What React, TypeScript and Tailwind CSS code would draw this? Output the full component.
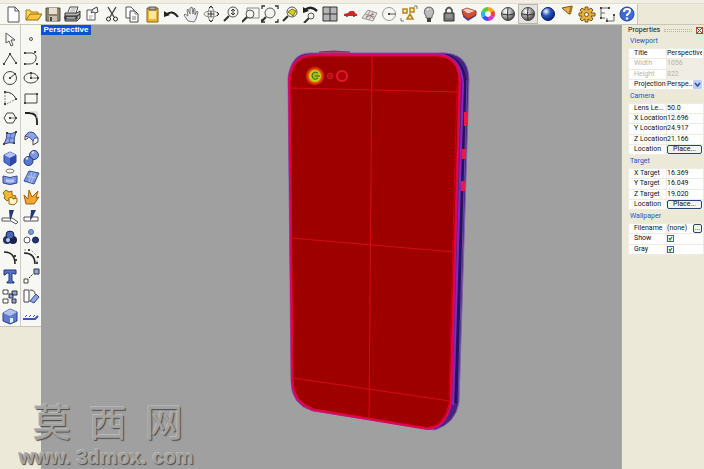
import React, { type ReactNode } from 'react';

type Tool = { name: string; icon: ReactNode; active?: boolean };

const ink = '#30302e';
const blue = '#4f70d0';
const pale = '#8fa5ea';

const Dots = ({ at, fill = '#444' }: { at: [number, number][]; fill?: string }) => (
  <>
    {at.map(([x, y]) => (
      <rect key={`${x}-${y}`} x={x - 1} y={y - 1} width="2" height="2" fill={fill} />
    ))}
  </>
);

const Lens = ({ x, y, r = 4 }: { x: number; y: number; r?: number }) => (
  <>
    <path d={`M${x - r + 1} ${y + r - 1}L${x - r - 4} ${y + r + 4}`} stroke={ink} strokeWidth="2" />
    <circle cx={x} cy={y} r={r} fill="#f4f4ee" stroke="#555" />
  </>
);

const Ball = ({ id, a, b, wire }: { id: string; a: string; b: string; wire?: boolean }) => (
  <>
    <radialGradient id={id} cx="0.35" cy="0.3" r="0.75">
      <stop offset="0" stopColor="#fff" />
      <stop offset="0.45" stopColor={a} />
      <stop offset="1" stopColor={b} />
    </radialGradient>
    <circle cx="9" cy="9" r="6.5" fill={`url(#${id})`} stroke={b} />
    {wire && <path d="M3 9Q9 11 15 9M9 3Q8 9 9 15" stroke="#333" />}
  </>
);

const topTools: Tool[] = [
  { name: 'New', icon: <><path d="M4 2h7l4 4v11H4z" fill="#fff" stroke="#555" /><path d="M11 2v4h4" stroke="#555" /></> },
  { name: 'Open', icon: <><path d="M2 15V5h4l1 2h7v3" fill="#f8d860" stroke="#b07808" /><path d="M2 15l4-6h12l-4 6z" fill="#ffc83a" stroke="#9a6808" /></> },
  { name: 'Save', icon: <><path d="M2 3h14v13H2z" fill="#8b8368" stroke="#55503f" /><path d="M5 3h8v6H5z" fill="#e4e1d2" /><path d="M5 11h8v5H5z" fill="#c4c0b0" /><path d="M6 12h2v4H6z" fill="#444" /></> },
  { name: 'Print', icon: <><path d="M5 7l2-5h8l-2 6" fill="#fff" stroke="#444" /><path d="M8 4h5M7 6h5" stroke="#999" /><path d="M2 8h12l3-2v7l-3 3H2z" fill="#b4b4b4" stroke="#333" /><path d="M2 11h12v3H2zM14 11l3-2" fill="#6b6b6b" stroke="#222" /><path d="M4 13h8" stroke="#ddd" /></> },
  { name: 'Properties', icon: <><path d="M4 5h8v10H4z" fill="#fff" stroke="#555" /><path d="M8 8l2-4 4-2 1 5-3 1-2-1z" fill="#eee" stroke="#444" /><path d="M6 11h4M6 13h3" stroke="#aaa" /></> },
  { name: 'Cut', icon: <><path d="M5 2l6 10M13 2L7 12" stroke="#444" strokeWidth="1.4" /><circle cx="5.5" cy="14" r="2" stroke="#222" /><circle cx="12.5" cy="14" r="2" stroke="#222" /></> },
  { name: 'Copy', icon: <><path d="M3 2h5l3 3v8H3z" fill="#fff" stroke="#555" /><path d="M7 6h5l3 3v8H7z" fill="#fff" stroke="#444" /><path d="M12 6v3h3M9 12h4M9 14h4" stroke="#777" /></> },
  { name: 'Paste', icon: <><path d="M4 3h11v14H4z" fill="#f0b72e" stroke="#886516" /><path d="M6 6h7v8H6z" fill="#ffe796" /><path d="M6 2h7v3H6z" fill="#aaa" stroke="#555" /></> },
  { name: 'Undo', icon: <><path d="M4 10Q10 4 16 12" stroke="#222" strokeWidth="2" /><path d="M2 6v6l6-2z" fill="#222" /></> },
  { name: 'Pan', icon: <path d="M6 16L2 10l1-1 3 2-1-6 1-1 2 5V3l2-1 1 7 1-6 1 1v6l2-4 1 1-2 7-2 3z" fill="#eee" stroke="#777" /> },
  { name: 'Rotate view', icon: <><ellipse cx="9" cy="9" rx="7" ry="3" stroke="#888" /><ellipse cx="9" cy="9" rx="3" ry="7" stroke="#888" /><path d="M9 6v6M6 9h6M7 3l2-2 2 2M7 15l2 2 2-2M15 7l2 2-2 2" stroke="#333" /></> },
  { name: 'Zoom dynamic', icon: <><Lens x={11} y={7} r={5} /><path d="M11 4v6M9 6l2-2 2 2M9 8l2 2 2-2" stroke="#333" /></> },
  { name: 'Zoom window', icon: <><path d="M5 3h12v10H5z" stroke="#888" /><Lens x={8} y={9} /></> },
  { name: 'Zoom extents', icon: <><Lens x={9} y={8} r={5} /><path d="M1 4V1h3M14 1h3v3M1 14v3h3M14 17h3v-3" stroke="#333" strokeWidth="1.3" /></> },
  { name: 'Zoom selected', icon: <><Lens x={11} y={7} r={5} /><path d="M7 7l4-3 4 2-3 5z" fill="#d5cf20" stroke="#777708" /></> },
  { name: 'Undo view', icon: <><path d="M4 5Q10 0 16 6" stroke="#222" strokeWidth="2.5" /><path d="M2 2v6l6-2z" fill="#222" /><Lens x={10} y={11} r={3} /></> },
  { name: 'Four views', icon: <><path d="M2 2h14v14H2z" fill="#b4b4b4" stroke="#333" /><path d="M9 2v14M2 9h14" stroke="#333" /></> },
  { name: 'Named view', icon: <><path d="M3 9l4-1 2-2h4l1 2 2 1v2H3z" fill="#d12a22" /><circle cx="6" cy="11" r="1" fill="#444" /><circle cx="13" cy="11" r="1" fill="#444" /></> },
  { name: 'Construction plane', icon: <><path d="M1 13l6-8 9 3-4 8z" fill="#e2e2e2" /><path d="M1 13l6-8 9 3-4 8zM4 9l10 3M9 6l-4 8M12 7l-4 8" stroke="#999" /><path d="M5 12l8-3M9 10l4 4" stroke="#b66" /></> },
  { name: 'Object snap', icon: <><circle cx="9" cy="9" r="6.5" stroke="#999" /><path d="M9 9h7" stroke="#555" /><Dots at={[[9, 9]]} /></> },
  { name: 'Select', icon: <><path d="M3 4h4v4H3zM10 3h4v4h-4zM7 14l3-5 3 5z" fill="#fff1a0" stroke="#b88420" strokeWidth="1.5" /><path d="M1 13v3h3M14 1h3v3" stroke="#777" /></> },
  { name: 'Hide', icon: <><path d="M6 11Q3 8 5 4q4-4 8 0 2 4-1 7v2H6z" fill="#bbb" stroke="#666" /><path d="M7 14h4M7 16h4" stroke="#444" strokeWidth="2" /><path d="M7 5q1-1 2-1" stroke="#fff" /></> },
  { name: 'Lock', icon: <><path d="M6 9V5q3-5 6 0v4" stroke="#555" strokeWidth="1.8" /><path d="M4 8h10v8H4z" fill="#777" stroke="#333" /><path d="M6 10h6M6 12h6" stroke="#aaa" /></> },
  { name: 'Layers', icon: <><path d="M3 9l5 3 8-4v3l-8 5-5-4z" fill="#3c4fa8" /><path d="M2 5l6 3 8-2v4l-8 4-5-4z" fill="#dc4a34" stroke="#8a3322" /><path d="M2 5l5-2 9 3-8 3z" fill="#f4c8b2" stroke="#a8604c" /></> },
  {
    name: 'Color',
    icon: (
      <g fill="none" strokeWidth="4">
        <path d="M9 4a5 5 0 0 1 4.3 2.5" stroke="#f5a91c" />
        <path d="M13.3 6.5a5 5 0 0 1 0 5" stroke="#f04238" />
        <path d="M13.3 11.5A5 5 0 0 1 9 14" stroke="#d136d0" />
        <path d="M9 14a5 5 0 0 1-4.3-2.5" stroke="#3b55ea" />
        <path d="M4.7 11.5a5 5 0 0 1 0-5" stroke="#20bde0" />
        <path d="M4.7 6.5A5 5 0 0 1 9 4" stroke="#55cf38" />
      </g>
    ),
  },
  { name: 'Shade', icon: <Ball id="ballA" a="#bbb" b="#444" wire /> },
  { name: 'Shaded viewport', icon: <Ball id="ballB" a="#aaa" b="#444" wire />, active: true },
  { name: 'Render', icon: <Ball id="ballC" a="#2758c0" b="#0b1d6c" /> },
  { name: 'Spotlight', icon: <><path d="M3 3l10-2-3 8z" fill="#e4b04a" stroke="#7b571c" /><path d="M11 1h3l-2 8-2 1z" fill="#aa7426" /></> },
  { name: 'Options', icon: <><path d="M7 2h3v3l3-2 2 2-2 3h4v3h-4l2 3-2 2-3-2v3H7v-3l-3 2-2-2 2-3H1V8h3L2 5l2-2 3 2z" fill="#e5ae39" stroke="#765718" /><circle cx="8.5" cy="9.5" r="2" fill="#fff" stroke="#765718" /></> },
  { name: 'Dimension', icon: <><path d="M3 3h8M3 3v10h4M9 13v3h7v-6M3 8h4" stroke="#666" /><Dots at={[[3, 3], [11, 3], [3, 13], [16, 10], [9, 16]]} /></> },
  { name: 'Help', icon: <><circle cx="9" cy="9" r="7" fill="#416bd4" stroke="#1e3f9e" /><path d="M6 7q0-3 3-3t3 2q0 2-3 4v1" stroke="#fff" strokeWidth="2" /><circle cx="9" cy="13.5" r="1.2" fill="#fff" /></> },
];

const sideTools: Tool[] = [
  { name: 'Pointer', icon: <path d="M5 3v10l3-2 2 5 2-1-2-5h4z" fill="#fff" stroke="#555" /> },
  { name: 'Point', icon: <circle cx="9" cy="9" r="1.5" stroke="#555" /> },
  { name: 'Polyline', icon: <><path d="M3 14L9 4l6 9" stroke="#444" /><Dots at={[[3, 14], [9, 4], [15, 13]]} /></> },
  { name: 'Curve', icon: <><path d="M3 3h7q5 1 4 6t-7 5H3" stroke="#444" /><Dots at={[[3, 3], [13, 2], [3, 14], [15, 14]]} /></> },
  { name: 'Circle', icon: <><circle cx="9" cy="9" r="6.5" stroke="#444" /><path d="M9 9l5-4" stroke="#444" /><Dots at={[[9, 9], [14, 5]]} /></> },
  { name: 'Ellipse', icon: <><ellipse cx="9" cy="9" rx="7" ry="5" stroke="#444" /><path d="M9 9V4M9 9h6" stroke="#777" /><Dots at={[[9, 9], [9, 4], [16, 9]]} /></> },
  { name: 'Arc', icon: <><path d="M4 3q8 0 11 7" stroke="#333" /><path d="M4 3v13l11-6" stroke="#888" strokeDasharray="2 1" /><Dots at={[[4, 3], [4, 15], [15, 10]]} /></> },
  { name: 'Rectangle', icon: <><path d="M3 5h12v9H3z" stroke="#444" /><Dots at={[[3, 14], [15, 5]]} /></> },
  { name: 'Polygon', icon: <><path d="M6 4h6l3 5-3 5H6L3 9z" stroke="#444" /><path d="M9 9h6" stroke="#777" /><Dots at={[[9, 9], [15, 9]]} /></> },
  { name: 'Fillet', icon: <><path d="M3 4h4q8 0 8 8v4" stroke="#222" strokeWidth="1.8" /><path d="M8 3h7v6" stroke="#ccc" /></> },
  { name: 'Surface', icon: <><path d="M6 4q4 2 9-1-2 5-2 11-5-1-10 1 3-5 3-11z" fill={pale} stroke="#33478e" /><path d="M5 9h9M10 4L8 14" stroke="#5269b7" /><Dots at={[[6, 4], [15, 3], [3, 15], [13, 14]]} /></> },
  { name: 'Loft', icon: <><path d="M3 7q4-6 9-3l4 5q-4-1-5 3-2-4-8-5z" fill={pale} stroke="#34488f" /><path d="M11 12v4l5-3V9M3 7v4l3-2" stroke="#444" /></> },
  { name: 'Box', icon: <><path d="M3 6l6-3 6 3v7l-6 4-6-4z" fill={blue} stroke="#2c469c" /><path d="M3 6l6-3 6 3-6 3z" fill="#b4c4f6" /><path d="M9 9l6-3v7l-6 4z" fill="#2d48a8" /></> },
  { name: 'Spheres', icon: <><circle cx="12" cy="6" r="4.5" fill="#7d97dd" stroke="#243a8a" /><circle cx="6.5" cy="12" r="4.5" fill="#587bd0" stroke="#1e367e" /><path d="M4 10l2-1M10 4l2-1" stroke="#d6dff8" strokeWidth="2" /></> },
  { name: 'Cylinder', icon: <><ellipse cx="9" cy="3" rx="4" ry="2" stroke="#777" /><path d="M2 8q7 3 14 0v7q-7 3-14 0z" fill="#7a94df" stroke="#334a98" /><path d="M5 11q4 1 8 0v3q-4 1-8 0z" fill="#bcc9f4" /></> },
  { name: 'Plane', icon: <><path d="M2 13L7 3l10 2-5 11z" fill="#7b98dd" stroke="#374f94" /><path d="M5 8l9 2M10 4l-3 10M13 5L9 15" stroke="#b4c3ee" /></> },
  { name: 'Join', icon: <><path d="M2 5l3-3 3 2 3-1v4l4 1-2 4-4-1-3 2-3-3 1-2z" fill="#f4b834" stroke="#96670d" /><path d="M8 10l3-1 1 2 4-1v4l-3 3-5-1z" fill="#fff1bd" stroke="#8c6b22" /></> },
  { name: 'Explode', icon: <path d="M4 16L2 7l4 4 1-9 3 7 6-6-2 7 3-1-5 7z" fill="#f5a530" stroke="#a86008" /> },
  { name: 'Trim', icon: <><path d="M1 10h10l6 4-2 2-5-3H1z" fill="#fff" stroke="#555" /><path d="M8 2h5l-3 9-1 2z" fill="#243a78" /></> },
  { name: 'Split', icon: <><path d="M2 9h14v4H2z" fill="#fff" stroke="#555" /><path d="M9 2h5l-4 8-2 3z" fill="#243a78" /></> },
  { name: 'Group', icon: <><circle cx="6" cy="12" r="4" fill="#27345f" /><circle cx="12" cy="12" r="4" fill="#162450" /><circle cx="9" cy="7" r="4" fill="#4967b9" stroke="#172345" /><circle cx="7" cy="12" r="2" fill="#bfcaec" /></> },
  { name: 'Ungroup', icon: <><circle cx="9" cy="4" r="2.5" fill="#829cdd" stroke="#526caa" /><circle cx="5" cy="12" r="3" fill="#fff" stroke="#555" /><circle cx="13.5" cy="12" r="3" fill="#243577" stroke="#172453" /></> },
  { name: 'Edit points', icon: <><path d="M3 4q11 0 11 12" stroke="#222" strokeWidth="1.5" /><Dots at={[[14, 8], [15, 12]]} /></> },
  { name: 'Control points', icon: <><path d="M2 5q11 0 11 11" stroke="#222" strokeWidth="1.5" /><path d="M2 2h7l6 6v7" stroke="#999" strokeDasharray="2 2" /><Dots at={[[7, 2], [16, 9], [15, 15]]} /></> },
  { name: 'Text', icon: <path d="M3 3h12v4h-2l-1-1h-1v8l2 1v1H6v-1l2-1V6H6L4 8H3z" fill="#5574c5" stroke="#20377f" /> },
  { name: 'Move', icon: <><path d="M2 12h4v4H2z" fill="#fff" stroke="#444" /><path d="M12 2h5v5h-5z" fill={pale} stroke="#333" /><path d="M7 11l4-4" stroke="#333" strokeDasharray="2 1" /></> },
  { name: 'Array', icon: <><path d="M2 3h5v4H2zM2 12h5v4H2z" fill="#fff" stroke="#444" /><path d="M11 4h5v4h-5zM8 7h4v4H8zM11 12h4v4h-4z" fill={pale} stroke="#333" /></> },
  { name: 'Rotate', icon: <><path d="M2 3h5v12H2z" fill="#fff" stroke="#444" /><path d="M8 14l6-7 3 3-5 6z" fill={pale} stroke="#33478e" /><path d="M8 3q5 0 5 4" stroke="#444" /></> },
  { name: 'Solid', icon: <><path d="M2 6l7-4 7 3v9l-7 3-7-3z" fill="#5d7ccb" stroke="#2c407d" /><path d="M2 6l7-4 7 3-7 4z" fill="#b2c1ec" /><path d="M9 11h3v4l-3 1z" fill="#e7ecfa" /></> },
  { name: 'Mesh', icon: <><path d="M1 12h12l3-3" stroke="#3a55aa" strokeWidth="2" /><path d="M3 10l2-2M7 10l2-2M11 10l2-2" stroke="#555" /></> },
];

function ToolButton({ tool }: { tool: Tool }) {
  return (
    <button
      type="button"
      aria-label={tool.name}
      className={`flex min-w-0 items-center justify-center ${tool.active ? 'bg-[#e4e3df] outline -outline-offset-1 outline-[#b8b6ae]' : ''}`}
    >
      <svg viewBox="0 0 18 18" fill="none" className="size-[18px] shrink-0">
        {tool.icon}
      </svg>
    </button>
  );
}

type Field = {
  label: string;
  value?: string;
  kind?: 'muted' | 'select' | 'button' | 'check' | 'file';
};

const sections: { title: string; height: string; fields: Field[] }[] = [
  {
    title: 'Viewport',
    height: 'h-[42px]',
    fields: [
      { label: 'Title', value: 'Perspective' },
      { label: 'Width', value: '1056', kind: 'muted' },
      { label: 'Height', value: '822', kind: 'muted' },
      { label: 'Projection', value: 'Perspe...', kind: 'select' },
    ],
  },
  {
    title: 'Camera',
    height: 'h-[52px]',
    fields: [
      { label: 'Lens Le...', value: '50.0' },
      { label: 'X Location', value: '12.696' },
      { label: 'Y Location', value: '24.917' },
      { label: 'Z Location', value: '21.166' },
      { label: 'Location', value: 'Place...', kind: 'button' },
    ],
  },
  {
    title: 'Target',
    height: 'h-[42px]',
    fields: [
      { label: 'X Target', value: '16.369' },
      { label: 'Y Target', value: '16.049' },
      { label: 'Z Target', value: '19.020' },
      { label: 'Location', value: 'Place...', kind: 'button' },
    ],
  },
  {
    title: 'Wallpaper',
    height: 'h-[32px]',
    fields: [
      { label: 'Filename', value: '(none)', kind: 'file' },
      { label: 'Show', kind: 'check' },
      { label: 'Gray', kind: 'check' },
    ],
  },
];

function FieldValue({ field, id }: { field: Field; id: string }) {
  switch (field.kind) {
    case 'select':
      return (
        <div className="relative">
          <select id={id} className="block h-[9px] w-full appearance-none bg-white pr-2 leading-[9px]">
            <option>{field.value}</option>
          </select>
          <svg viewBox="0 0 9 9" className="pointer-events-none absolute top-0 right-0 size-[9px]">
            <rect width="9" height="9" rx="1" fill="#bed0fa" />
            <path d="M2 3l2.5 3L7 3" fill="none" stroke="#334d91" strokeWidth="1.5" />
          </svg>
        </div>
      );
    case 'button':
      return (
        <button
          id={id}
          type="button"
          className="flex h-[9px] w-full items-center justify-center rounded-xs border border-[#24466f] bg-[#f5f4ee]"
        >
          {field.value}
        </button>
      );
    case 'check':
      return (
        <span className="relative block size-[7px]">
          <input id={id} type="checkbox" defaultChecked className="peer block size-[7px] appearance-none border border-[#41698c] bg-[#f4f8f2]" />
          <svg viewBox="0 0 7 7" className="pointer-events-none absolute inset-0 hidden peer-checked:block">
            <path d="M2 3l1 2 2-3" fill="none" stroke="#219332" strokeWidth="1.3" />
          </svg>
        </span>
      );
    case 'file':
      return (
        <div className="flex items-center justify-between">
          <output id={id}>{field.value}</output>
          <button type="button" aria-label="Browse" className="flex h-[9px] w-[9px] items-center justify-center rounded-xs border border-[#24466f] bg-[#f5f4ee] leading-none">
            ...
          </button>
        </div>
      );
    default:
      return (
        <input
          id={id}
          defaultValue={field.value}
          disabled={field.kind === 'muted'}
          className="block h-[9px] w-full bg-transparent outline-none"
        />
      );
  }
}

function Properties() {
  return (
    <aside className="flex w-[83px] shrink-0 flex-col border-l border-[#aaa89c] bg-[#ece9d8] pl-[6px] font-[Roboto,'Liberation_Sans',sans-serif] text-[7px] leading-[9px] text-[#111]">
      <header className="flex h-[10px] items-center gap-1">
        <h2>Properties</h2>
        <span className="h-[3px] flex-1 border-y border-dotted border-[#bbb8a8]" />
        <button type="button" aria-label="Close" className="mr-px flex size-[7px] items-center justify-center border border-[#c44234] bg-[#fff3ef]">
          <svg viewBox="0 0 5 5" className="size-[5px]">
            <path d="M0 0l5 5M5 0L0 5" stroke="#c22f21" />
          </svg>
        </button>
      </header>
      {sections.map((section) => (
        <section key={section.title}>
          <h3 className="flex h-[13px] items-center pl-[2px] text-[#2355c5]">{section.title}</h3>
          <table className={`w-full table-fixed border-collapse ${section.height}`}>
            <tbody>
              {section.fields.map((field) => {
                const id = `${section.title}-${field.label}`;
                const muted = field.kind === 'muted';
                return (
                  <tr key={id} className={muted ? 'text-[#b5b3a8]' : ''}>
                    <th scope="row" className="w-[38px] border border-[#eeece2] bg-white p-0 pl-[5px] text-left font-normal whitespace-nowrap">
                      <label htmlFor={id}>{field.label}</label>
                    </th>
                    <td className={`border border-[#eeece2] p-0 pr-px ${muted ? 'bg-[#f0eee4]' : 'bg-white'}`}>
                      <FieldValue field={field} id={id} />
                    </td>
                  </tr>
                );
              })}
            </tbody>
          </table>
        </section>
      ))}
    </aside>
  );
}

function Phone() {
  return (
    <svg viewBox="284 46 190 390" fill="none" className="absolute top-[21px] left-[243px] h-[390px] w-[190px]" role="img" aria-label="Phone model">
      <defs>
        <radialGradient id="flash">
          <stop offset="0.4" stopColor="#d8c215" />
          <stop offset="0.7" stopColor="#e84a08" />
          <stop offset="1" stopColor="#9e0000" />
        </radialGradient>
      </defs>
      <path d="M319 54v-2q14-2 31 0v2" fill="#b81c30" stroke="#c81a3c" />
      <path d="M310 53H438Q469 51 469 80L459 402Q456 423 435 430L313 411Q291 405 291 381L288 78Q291 53 310 53z" fill="#46247f" stroke="#8060b0" />
      <path d="M446 55Q465 62 465 85L456 403" stroke="#23155b" strokeWidth="3" />
      <path d="M440 54Q462 58 463 84L453 405" stroke="#8d24bf" strokeWidth="2" />
      <path d="M467 80L458 402" stroke="#6547a0" />
      <path d="M310 55H438Q460 56 460 82L451 402Q447 428 427 429L313 410Q292 402 292 380L289 79Q291 57 310 55z" fill="#9e0000" stroke="#d40a68" strokeWidth="2" />
      <path d="M311 56H437Q459 57 459 82L450 401Q445 426 427 428L314 409Q293 402 293 380L290 80Q292 58 311 56z" stroke="#f00030" />
      <path d="M457 84L449 398" stroke="#c90018" />
      <path d="M290 88l168 4M291 238l163 14M293 378l157 23M372 56l-3 363" stroke="#d90a12" />
      <path d="M466 112v14M464 149v10M463 181v10" stroke="#e81c40" strokeWidth="4" />
      <circle cx="315" cy="76" r="10" fill="url(#flash)" />
      <circle cx="315" cy="76" r="5" fill="#a7bc16" stroke="#c8cc15" strokeWidth="2" />
      <path d="M318 73q-3-2-5 0t0 5 5 0M315 76h5" stroke="#386518" />
      <circle cx="330" cy="76" r="3" fill="#b80c1a" stroke="#d01428" />
      <circle cx="342" cy="76" r="5" fill="#aa0008" stroke="#e4182c" strokeWidth="2" />
    </svg>
  );
}

export default function App() {
  return (
    <div className="relative flex min-h-screen flex-col overflow-hidden bg-[#ece9d8] font-['Liberation_Sans',sans-serif]">
      <header className="border-b border-[#c8c6bb]">
        <div className="h-1 border-b border-[#e1ded0] bg-[#f1efe5]" />
        <div role="toolbar" aria-label="Standard" className="grid h-5 w-[634px] grid-cols-[repeat(32,minmax(0,1fr))] border-r border-[#c8c6bb] bg-[#f7f7f3] pl-[3px] box-content">
          {topTools.map((tool) => <ToolButton key={tool.name} tool={tool} />)}
        </div>
      </header>
      <div className="flex flex-1">
        <div className="w-[41px] shrink-0">
          <div role="toolbar" aria-label="Modeling" className="grid h-[302px] grid-cols-2 grid-rows-[repeat(15,minmax(0,1fr))] border-b border-[#c8c6bb] bg-[linear-gradient(90deg,#f7f7f3_20px,#cfcdc3_20px,#cfcdc3_21px,#f7f7f3_21px)] pt-1">
            {sideTools.map((tool) => <ToolButton key={tool.name} tool={tool} />)}
          </div>
        </div>
        <main className="relative min-w-0 flex-1 overflow-hidden bg-[#a0a0a0]">
          <h1 className="flex h-[10px] w-[50px] items-center justify-center bg-[#0d52d1] text-[8px] font-bold text-white">Perspective</h1>
          <Phone />
        </main>
        <Properties />
      </div>
      <div className="pointer-events-none absolute bottom-0 left-[19px] text-[#a2a2a0] [text-shadow:1px_1px_1px_#4c4c4c,-1px_-1px_0_#b8b8b6]">
        <p className="flex gap-[18px] pl-[14px] font-['Liberation_Sans','Noto_Sans_CJK_SC',sans-serif] text-[38px] leading-[44px]">
          <span>莫</span><span>西</span><span>网</span>
        </p>
        <p className="flex gap-[6px] text-[20px] leading-6 font-bold">
          <span>www.</span><span>3dmox.</span><span>com</span>
        </p>
      </div>
    </div>
  );
}
